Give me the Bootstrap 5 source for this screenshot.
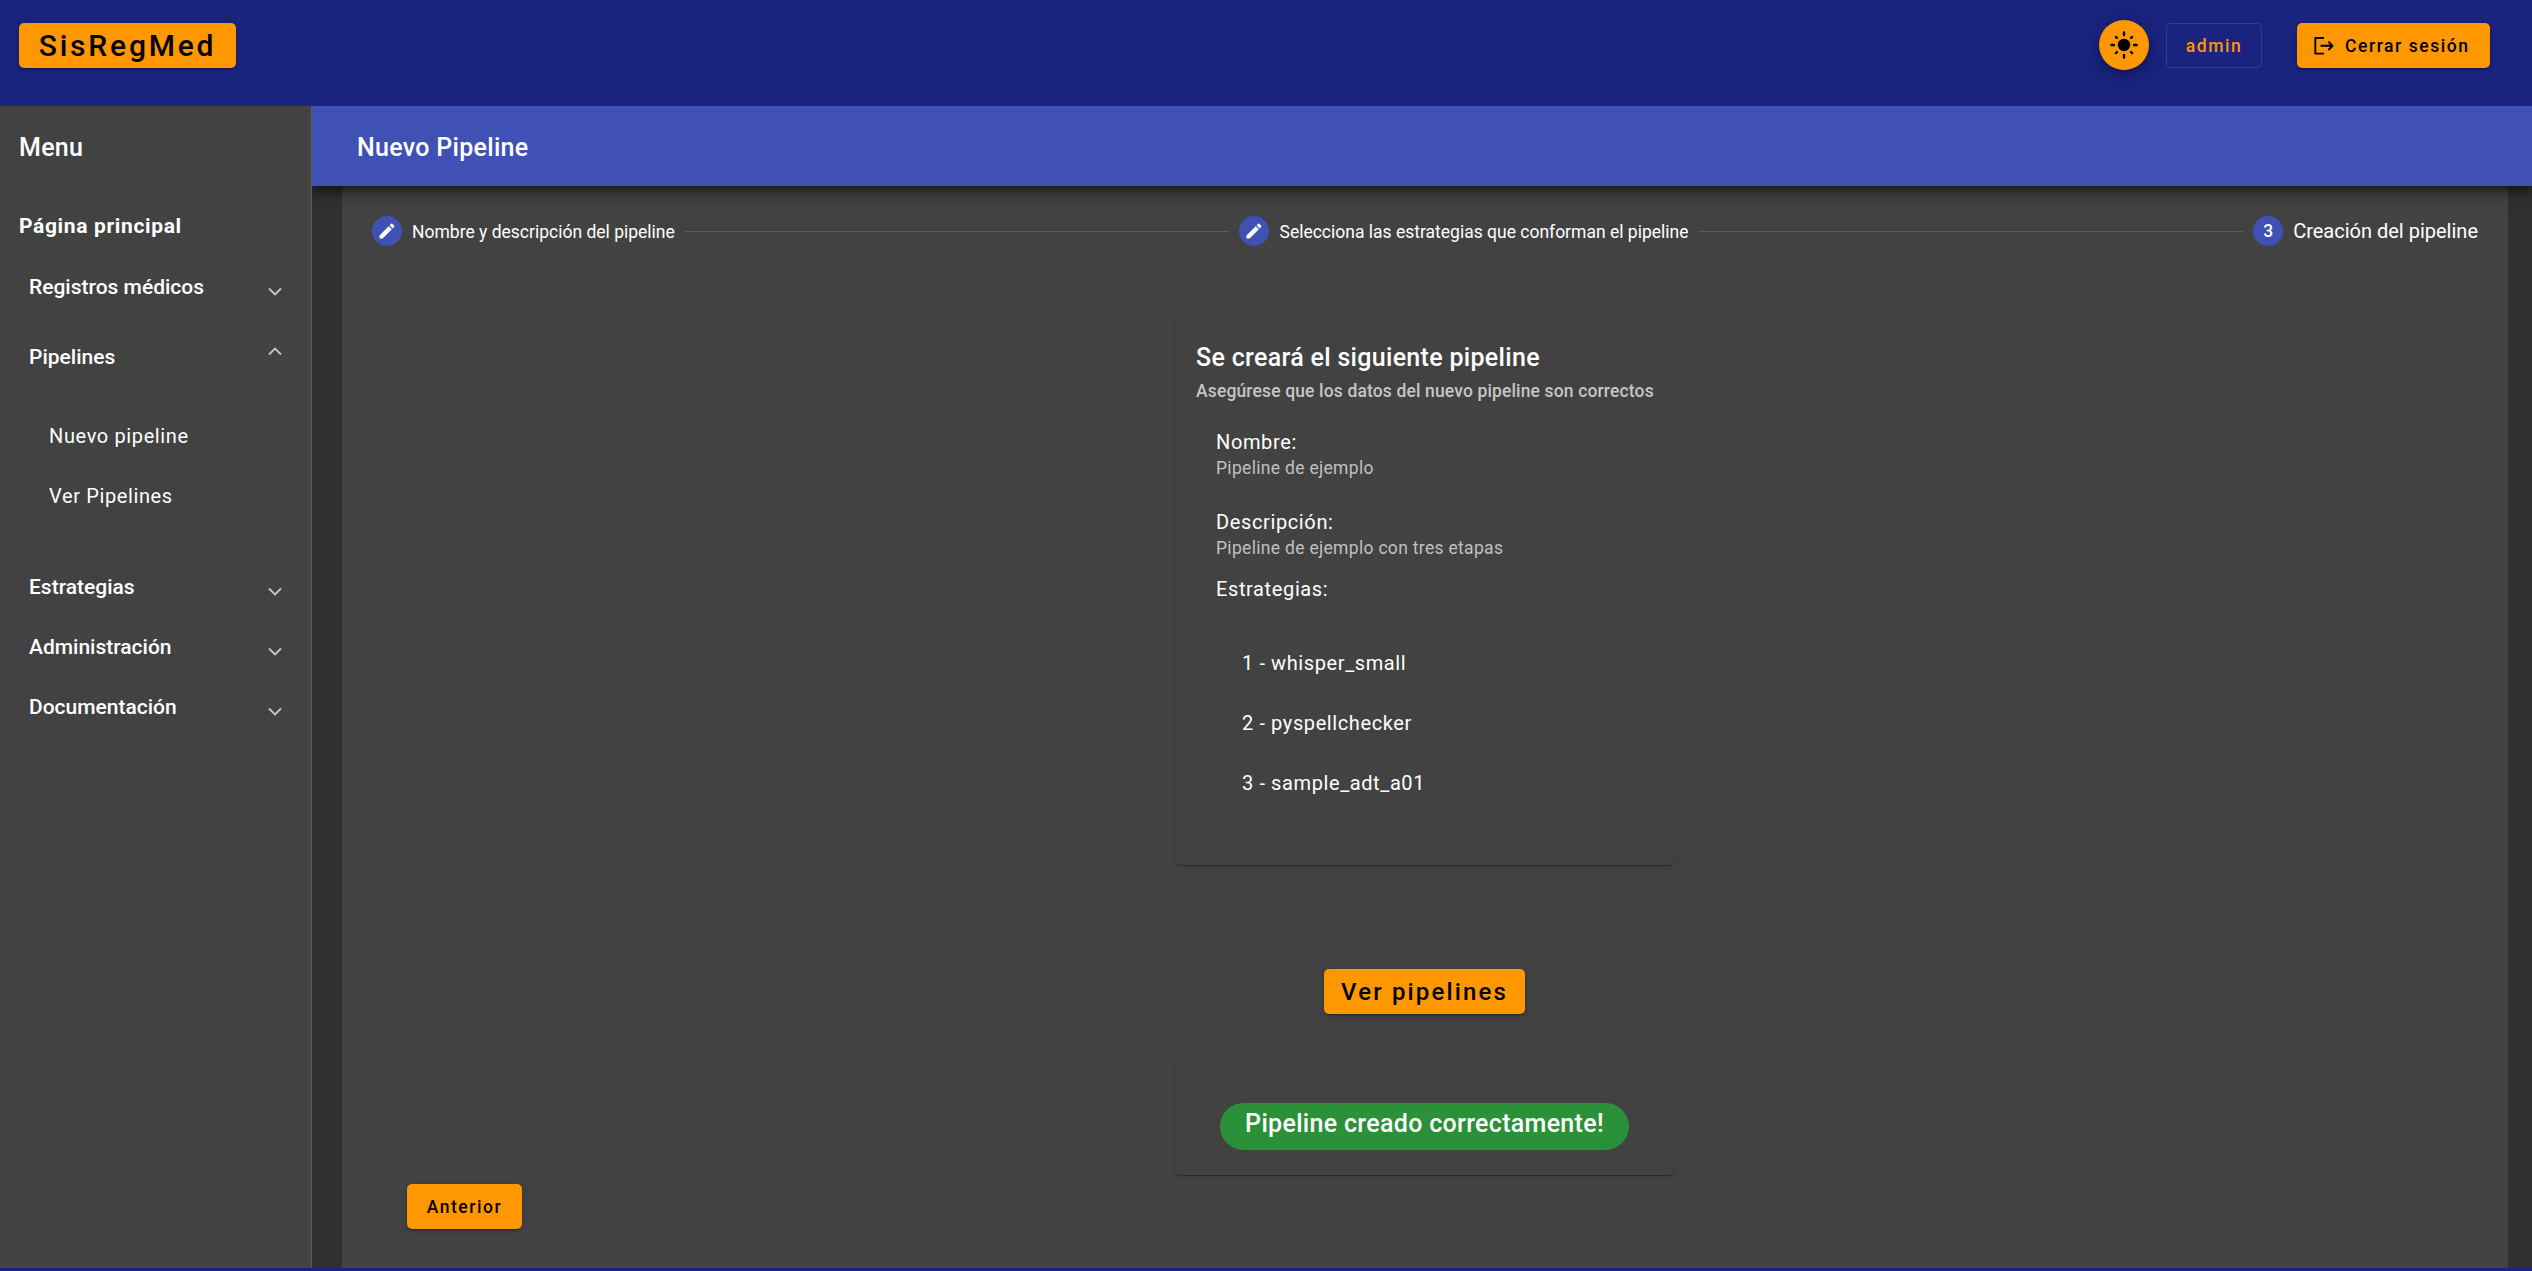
<!DOCTYPE html>
<html lang="es" data-bs-theme="dark">
<head>
<meta charset="utf-8">
<meta name="viewport" content="width=device-width, initial-scale=1">
<title>SisRegMed</title>
<link href="https://cdn.jsdelivr.net/npm/bootstrap@5.3.0/dist/css/bootstrap.min.css" rel="stylesheet">
<style>
body{font-family:Roboto,"Liberation Sans",sans-serif;background:#303030;color:#fff;font-size:20px;height:100vh;overflow:hidden}
.topbar{height:106px;background:#1a237e;padding:20px 42px 0 19px}
.btn-accent{--bs-btn-bg:#ff9800;--bs-btn-color:#000;--bs-btn-border-width:0;--bs-btn-hover-bg:#ffa726;--bs-btn-hover-color:#000;height:45px;border-radius:5px;padding:0 20px;font-size:17.5px;font-weight:500;letter-spacing:1.5625px;line-height:46px;white-space:nowrap;box-shadow:0 4px 1px -3px rgba(0,0,0,.2),0 2px 3px rgba(0,0,0,.14),0 1px 6px rgba(0,0,0,.12)}
.btn-brand{font-size:30px;letter-spacing:2.8px;width:217px;margin-top:3px;line-height:45px}
.btn-theme{width:50px;height:50px;border-radius:50%;padding:0;box-shadow:0 4px 6px -1px rgba(0,0,0,.2),0 7px 12px rgba(0,0,0,.14),0 1px 22px rgba(0,0,0,.12)}
.btn-user{height:45px;width:96px;margin:3px 35px 0 17px;border:1px solid rgba(255,255,255,.12);border-radius:5px;color:#ff9800;font-size:17.5px;font-weight:500;letter-spacing:1.5625px;padding:1px 0 0}
.btn-exit{width:193px;margin-top:3px;padding:0 0 0 15px}
.btn-exit svg{margin-right:10px}
.side{width:312px;background:#424242;border-right:1px solid #5a5a5a}
.side-title{height:81px;padding:2px 0 0 19px;font-size:25px;font-weight:500;letter-spacing:.3px}
.side-home{height:60px;margin-top:9px;padding:2px 0 0 19px;font-size:21px;font-weight:700;letter-spacing:.65px}
.side-row{height:60px;padding:3px 29px 0 29px;font-size:21px;font-weight:500}
.side-row svg{margin-top:8px}
.side-row.open{height:80px}
.side-row.open svg{margin-top:0;margin-bottom:13px}
.side-sub{padding:10px 0 30px 49px}
.side-sub a{height:60px;color:#fff;letter-spacing:.625px}
.titlebar{height:80px;background:#3f51b5;padding:3px 0 0 45px;font-size:25px;font-weight:500;letter-spacing:.3px;position:relative;z-index:2;box-shadow:0 4px 5px -2px rgba(0,0,0,.2),0 5px 6px rgba(0,0,0,.14),0 4px 16px 2px rgba(0,0,0,.45)}
.sheet{margin:0 24px 0 30px;background:#424242;position:relative}
.stepper{padding:30px 30px 0;height:60px}
.step-dot{width:30px;height:30px;border-radius:50%;background:#3f51b5;font-size:17.5px;font-weight:500;margin-right:10px}
.step-text{font-size:17.5px;padding-top:2px}
.step-text.current{font-size:20px;padding-top:0}
.step-line{height:1px;background:#5b5b5b;margin:1px 10px 0}
.mcard{width:498px;border-radius:5px;box-shadow:0 3px 1px -2px rgba(0,0,0,.2),0 1px 1px rgba(0,0,0,.14),0 1px 4px rgba(0,0,0,.12)}
.summary{height:550px;margin-top:69px;padding:22px 20px 0}
.summary h1{font-size:25px;font-weight:500;line-height:41px;letter-spacing:.3125px;margin:0}
.summary h2{font-size:17.5px;font-weight:500;line-height:26px;color:#c6c6c6;margin:0;letter-spacing:.14px}
.field{padding-left:20px;letter-spacing:.625px;line-height:26px}
.field small{display:block;font-size:17.5px;line-height:26px;color:#c0c0c0;letter-spacing:.31px}
.field-name{margin-top:25px}
.field-desc{margin-top:28px}
.field-strat{margin-top:15px}
.strategies{padding:31px 0 0 46px;margin:0;letter-spacing:.6px}
.strategies li{height:60px;line-height:60px}
.btn-view{width:201px;padding:0;font-size:24px;letter-spacing:2.14px;margin:104px 1px 0 0}
.notice{width:499px;height:118px;margin:43px 1px 0 0;padding-top:46px}
.pill{width:409px;height:47px;border-radius:24px;background:#2a9139;font-size:25px;font-weight:500;line-height:42px;letter-spacing:.3125px}
.btn-prev{margin:9px 0 0 65px;width:115px;padding:0}
.bottombar{height:3px;background:#1a237e}
</style>
</head>
<body class="d-flex flex-column">
<header class="topbar d-flex align-items-start flex-shrink-0">
  <button class="btn btn-accent btn-brand text-center px-0">SisRegMed</button>
  <button class="btn btn-accent btn-theme ms-auto d-flex align-items-center justify-content-center" aria-label="Tema">
    <svg width="30" height="30" viewBox="0 0 30 30" stroke="#000" stroke-width="2.4" stroke-linecap="round"><circle cx="15" cy="15" r="6.2" stroke="none"/><path d="M15 2.4v2.6M15 25v2.6M2.4 15h2.6M25 15h2.6M6.9 6.9l1 1M22.1 22.1l1 1M6.9 23.1l1-1M22.1 7.9l1-1"/></svg>
  </button>
  <button class="btn btn-user">admin</button>
  <button class="btn btn-accent btn-exit d-flex align-items-center">
    <svg width="23" height="22" viewBox="0 0 23 22" fill="none" stroke="#000" stroke-width="1.9" stroke-linejoin="round"><path d="M12 3H3.3v15.6H12M8.5 10.8h12M16.4 6.6l4.2 4.2-4.2 4.2"/></svg>Cerrar sesión
  </button>
</header>
<div class="d-flex flex-grow-1 overflow-hidden">
  <nav class="side flex-shrink-0">
    <div class="side-title d-flex align-items-center">Menu</div>
    <div class="side-home d-flex align-items-center">Página principal</div>
    <div class="side-row d-flex align-items-center justify-content-between">Registros médicos<svg width="14" height="10" viewBox="0 0 14 10" fill="none" stroke="#c5c5c5" stroke-width="1.9"><path d="M1 1.5l6 6 6-6"/></svg></div>
    <div class="side-row open d-flex align-items-center justify-content-between">Pipelines<svg width="14" height="10" viewBox="0 0 14 10" fill="none" stroke="#c5c5c5" stroke-width="1.9"><path d="M1 8.5l6-6 6 6"/></svg></div>
    <div class="side-sub d-flex flex-column">
      <a class="d-flex align-items-center text-decoration-none" href="#">Nuevo pipeline</a>
      <a class="d-flex align-items-center text-decoration-none" href="#">Ver Pipelines</a>
    </div>
    <div class="side-row d-flex align-items-center justify-content-between">Estrategias<svg width="14" height="10" viewBox="0 0 14 10" fill="none" stroke="#c5c5c5" stroke-width="1.9"><path d="M1 1.5l6 6 6-6"/></svg></div>
    <div class="side-row d-flex align-items-center justify-content-between">Administración<svg width="14" height="10" viewBox="0 0 14 10" fill="none" stroke="#c5c5c5" stroke-width="1.9"><path d="M1 1.5l6 6 6-6"/></svg></div>
    <div class="side-row d-flex align-items-center justify-content-between">Documentación<svg width="14" height="10" viewBox="0 0 14 10" fill="none" stroke="#c5c5c5" stroke-width="1.9"><path d="M1 1.5l6 6 6-6"/></svg></div>
  </nav>
  <main class="flex-grow-1 d-flex flex-column overflow-hidden">
    <div class="titlebar d-flex align-items-center flex-shrink-0">Nuevo Pipeline</div>
    <div class="sheet flex-grow-1">
      <div class="stepper d-flex align-items-center">
        <span class="step-dot d-flex align-items-center justify-content-center"><svg width="20" height="20" viewBox="0 0 24 24" fill="#fff"><path d="M3 17.25V21h3.75L17.81 9.94l-3.75-3.75L3 17.25zM20.71 7.04a1 1 0 0 0 0-1.41l-2.34-2.34a1 1 0 0 0-1.41 0l-1.83 1.83 3.75 3.75 1.83-1.83z"/></svg></span>
        <span class="step-text">Nombre y descripción del pipeline</span>
        <span class="step-line flex-grow-1"></span>
        <span class="step-dot d-flex align-items-center justify-content-center"><svg width="20" height="20" viewBox="0 0 24 24" fill="#fff"><path d="M3 17.25V21h3.75L17.81 9.94l-3.75-3.75L3 17.25zM20.71 7.04a1 1 0 0 0 0-1.41l-2.34-2.34a1 1 0 0 0-1.41 0l-1.83 1.83 3.75 3.75 1.83-1.83z"/></svg></span>
        <span class="step-text">Selecciona las estrategias que conforman el pipeline</span>
        <span class="step-line flex-grow-1"></span>
        <span class="step-dot d-flex align-items-center justify-content-center">3</span>
        <span class="step-text current">Creación del pipeline</span>
      </div>
      <div class="d-flex flex-column align-items-center">
        <section class="mcard summary">
          <h1>Se creará el siguiente pipeline</h1>
          <h2>Asegúrese que los datos del nuevo pipeline son correctos</h2>
          <div class="field field-name">Nombre:<small>Pipeline de ejemplo</small></div>
          <div class="field field-desc">Descripción:<small>Pipeline de ejemplo con tres etapas</small></div>
          <div class="field field-strat">Estrategias:</div>
          <ul class="strategies list-unstyled">
            <li>1 - whisper_small</li>
            <li>2 - pyspellchecker</li>
            <li>3 - sample_adt_a01</li>
          </ul>
        </section>
        <button class="btn btn-accent btn-view">Ver pipelines</button>
        <section class="mcard notice d-flex justify-content-center">
          <div class="pill text-center">Pipeline creado correctamente!</div>
        </section>
      </div>
      <button class="btn btn-accent btn-prev">Anterior</button>
    </div>
  </main>
</div>
<footer class="bottombar flex-shrink-0"></footer>
<script src="https://cdn.jsdelivr.net/npm/bootstrap@5.3.0/dist/js/bootstrap.bundle.min.js"></script>
</body>
</html>
